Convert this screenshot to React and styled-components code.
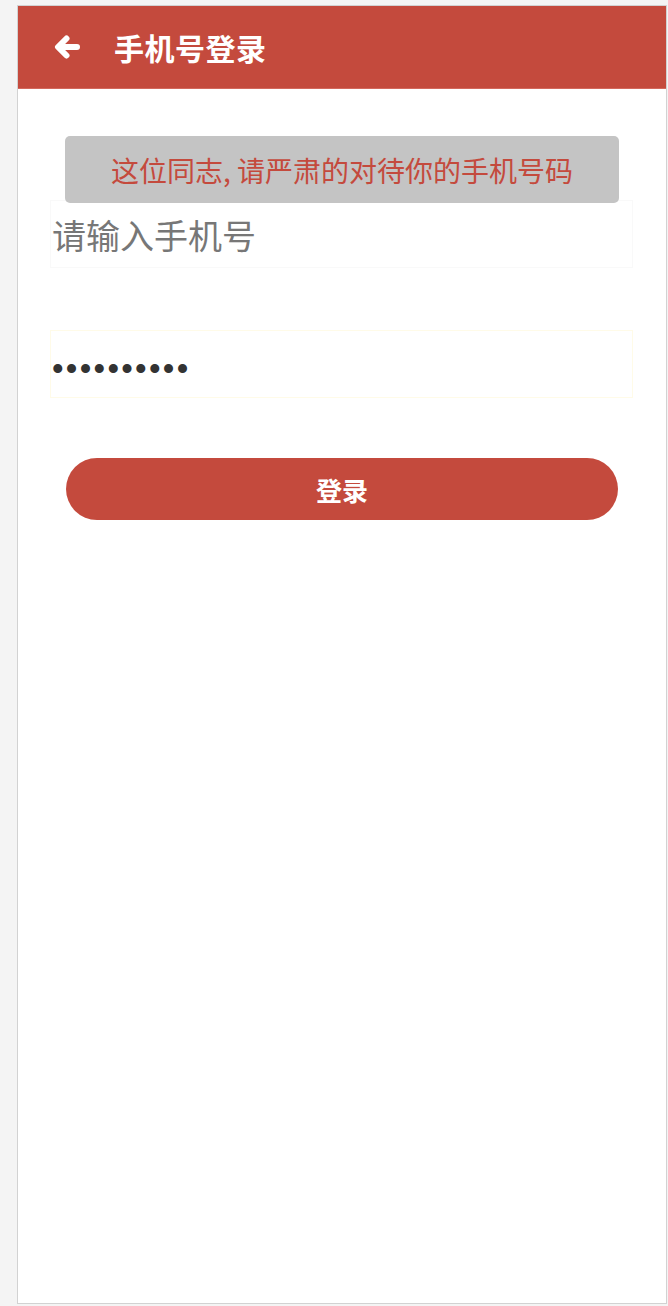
import React, { useState } from 'react';
import styled, { createGlobalStyle } from 'styled-components';

const GlobalStyle = createGlobalStyle`
  * {
    box-sizing: border-box;
  }
  body {
    margin: 0;
    background: #f4f4f4;
    font-family: "Noto Sans CJK SC", "Noto Sans", sans-serif;
  }
`;

function BackArrow() {
  return (
    <svg width='26' height='26' viewBox='0 0 26 26' fill='none'>
      <path
        d='M23 13H5M12.5 4.5L4 13l8.5 8.5'
        stroke='currentColor'
        strokeWidth='6'
        strokeLinecap='round'
        strokeLinejoin='round'
      />
    </svg>
  );
}

export default function App() {
  const [phone, setPhone] = useState('');
  const [password, setPassword] = useState('1234567890');

  return (
    <>
      <GlobalStyle />
      <Frame>
        <Header>
          <BackBtn type='button' aria-label='返回'>
            <BackArrow />
          </BackBtn>
          <Title>手机号登录</Title>
        </Header>
        <Form>
          <Notice>这位同志, 请严肃的对待你的手机号码</Notice>
          <Field
            type='text'
            placeholder='请输入手机号'
            value={phone}
            onChange={(e) => setPhone(e.target.value)}
          />
          <PasswordField
            type='password'
            value={password}
            onChange={(e) => setPassword(e.target.value)}
          />
          <LoginBtn type='button'>登录</LoginBtn>
        </Form>
      </Frame>
    </>
  );
}

const Frame = styled.div`
  width: 650px;
  height: 1299px;
  margin: 5px 0 0 17px;
  background: #fff;
  border: 1px solid #d2d2d2;
  display: flex;
  flex-direction: column;
`;

const Header = styled.header`
  height: 83px;
  background: #c44a3d;
  border-bottom: 1px solid #d3685c;
  display: flex;
  align-items: center;
  padding-left: 36px;
  gap: 34px;
`;

const BackBtn = styled.button`
  border: none;
  background: none;
  padding: 0;
  color: #fff;
  display: flex;
  align-items: center;
  cursor: pointer;
`;

const Title = styled.h1`
  margin: 0;
  color: #fff;
  font-size: 30px;
  font-weight: 700;
  letter-spacing: 0.5px;
`;

const Form = styled.section`
  padding: 47px 32px 0;
  display: flex;
  flex-direction: column;
`;

const Notice = styled.p`
  position: relative;
  z-index: 1;
  margin: 0 15px;
  height: 67px;
  background: #c4c4c4;
  border-radius: 5px;
  color: #c44a3d;
  font-size: 28px;
  display: flex;
  align-items: center;
  justify-content: center;
`;

const Field = styled.input`
  width: 583px;
  height: 68px;
  margin-top: -3px;
  padding: 0 1px;
  border: 1px solid #f9f9f9;
  background: transparent;
  outline: none;
  font-family: inherit;
  font-size: 34px;
  color: #333;
  &::placeholder {
    color: #777;
  }
`;

const PasswordField = styled(Field)`
  margin-top: 62px;
  padding-top: 10px;
  border-color: #fffbe8;
  font-family: "Liberation Sans", sans-serif;
  font-size: 33px;
  letter-spacing: 2.3px;
`;

const LoginBtn = styled.button`
  margin: 60px 16px 0;
  height: 62px;
  border: none;
  border-radius: 31px;
  background: #c44a3d;
  color: #fff;
  font-family: inherit;
  font-size: 26px;
  font-weight: 700;
  cursor: pointer;
`;
